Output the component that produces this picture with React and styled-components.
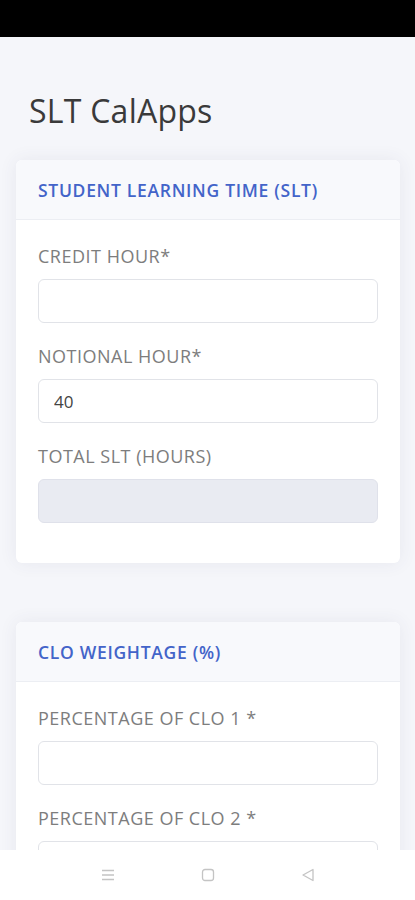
import React from "react";
import styled, { createGlobalStyle } from "styled-components";

const Global = createGlobalStyle`
  html, body { margin: 0; padding: 0; background: #f5f6fa; overflow: hidden; }
  body { font-family: "Open Sans", Lato, sans-serif; }
  * { box-sizing: border-box; }
`;

const StatusBar = styled.div`
  height: 37px;
  background: #000;
`;

const Page = styled.main`
  padding: 54px 15px 0 16px;
  display: flex;
  flex-direction: column;
`;

const Title = styled.h1`
  margin: 0 0 29px 13px;
  font-family: "Open Sans", sans-serif;
  font-weight: 400;
  font-size: 32px;
  line-height: 40px;
  letter-spacing: 0.25px;
  color: #3a3a3a;
`;

const Card = styled.section`
  background: #fff;
  border-radius: 6px;
  box-shadow: 0 0 18px rgba(60, 70, 100, 0.08);
  margin-bottom: ${(p) => p.$gap || 0}px;
  overflow: hidden;
`;

const CardHeader = styled.div`
  height: 60px;
  background: #f8f9fc;
  border-bottom: 1px solid #eceef3;
  display: flex;
  align-items: center;
  padding: 0 22px;
  color: #4364c9;
  font-weight: 600;
  font-size: 17.5px;
  letter-spacing: 0.7px;
`;

const CardBody = styled.div`
  padding: 25px 22px 40px 22px;
  display: flex;
  flex-direction: column;
`;

const Label = styled.label`
  font-size: 18px;
  color: #7d7d7d;
  line-height: 22px;
  margin-bottom: 12px;
  letter-spacing: 0.5px;
`;

const Input = styled.input`
  height: 44px;
  width: 100%;
  border: 1px solid ${(p) => (p.disabled ? "#dfe1ea" : "#e1e3e8")};
  border-radius: 6px;
  background: ${(p) => (p.disabled ? "#e9ebf2" : "#fff")};
  padding: 0 15px;
  font-family: "Open Sans", sans-serif;
  font-size: 17px;
  color: #444;
  margin-bottom: 22px;
  outline: none;
  &:last-child { margin-bottom: 0; }
`;

const NavBar = styled.nav`
  position: fixed;
  left: 0;
  right: 0;
  bottom: 0;
  height: 50px;
  background: #fff;
  display: flex;
  justify-content: center;
  align-items: center;
  gap: 84px;
`;

const NavIcon = styled.svg`
  width: 16px;
  height: 16px;
  display: block;
`;

export default function App() {
  return (
    <>
      <Global />
      <StatusBar />
      <Page>
        <Title>SLT CalApps</Title>
        <Card $gap={59}>
          <CardHeader>STUDENT LEARNING TIME (SLT)</CardHeader>
          <CardBody>
            <Label>CREDIT HOUR*</Label>
            <Input />
            <Label>NOTIONAL HOUR*</Label>
            <Input defaultValue="40" />
            <Label>TOTAL SLT (HOURS)</Label>
            <Input disabled />
          </CardBody>
        </Card>
        <Card>
          <CardHeader>CLO WEIGHTAGE (%)</CardHeader>
          <CardBody>
            <Label>PERCENTAGE OF CLO 1 *</Label>
            <Input />
            <Label>PERCENTAGE OF CLO 2 *</Label>
            <Input />
            <Label>PERCENTAGE OF CLO 3 *</Label>
            <Input />
          </CardBody>
        </Card>
      </Page>
      <NavBar>
        <NavIcon viewBox="0 0 16 16">
          <path d="M2 3.5h12M2 8h12M2 12.5h12" stroke="#c4c4c4" strokeWidth="1.3" fill="none" />
        </NavIcon>
        <NavIcon viewBox="0 0 16 16">
          <rect x="2.5" y="2.5" width="11" height="11" rx="2.5" stroke="#c4c4c4" strokeWidth="1.3" fill="none" />
        </NavIcon>
        <NavIcon viewBox="0 0 16 16">
          <path d="M13 2.5v11L3 8z" stroke="#c4c4c4" strokeWidth="1.3" strokeLinejoin="round" fill="none" />
        </NavIcon>
      </NavBar>
    </>
  );
}
